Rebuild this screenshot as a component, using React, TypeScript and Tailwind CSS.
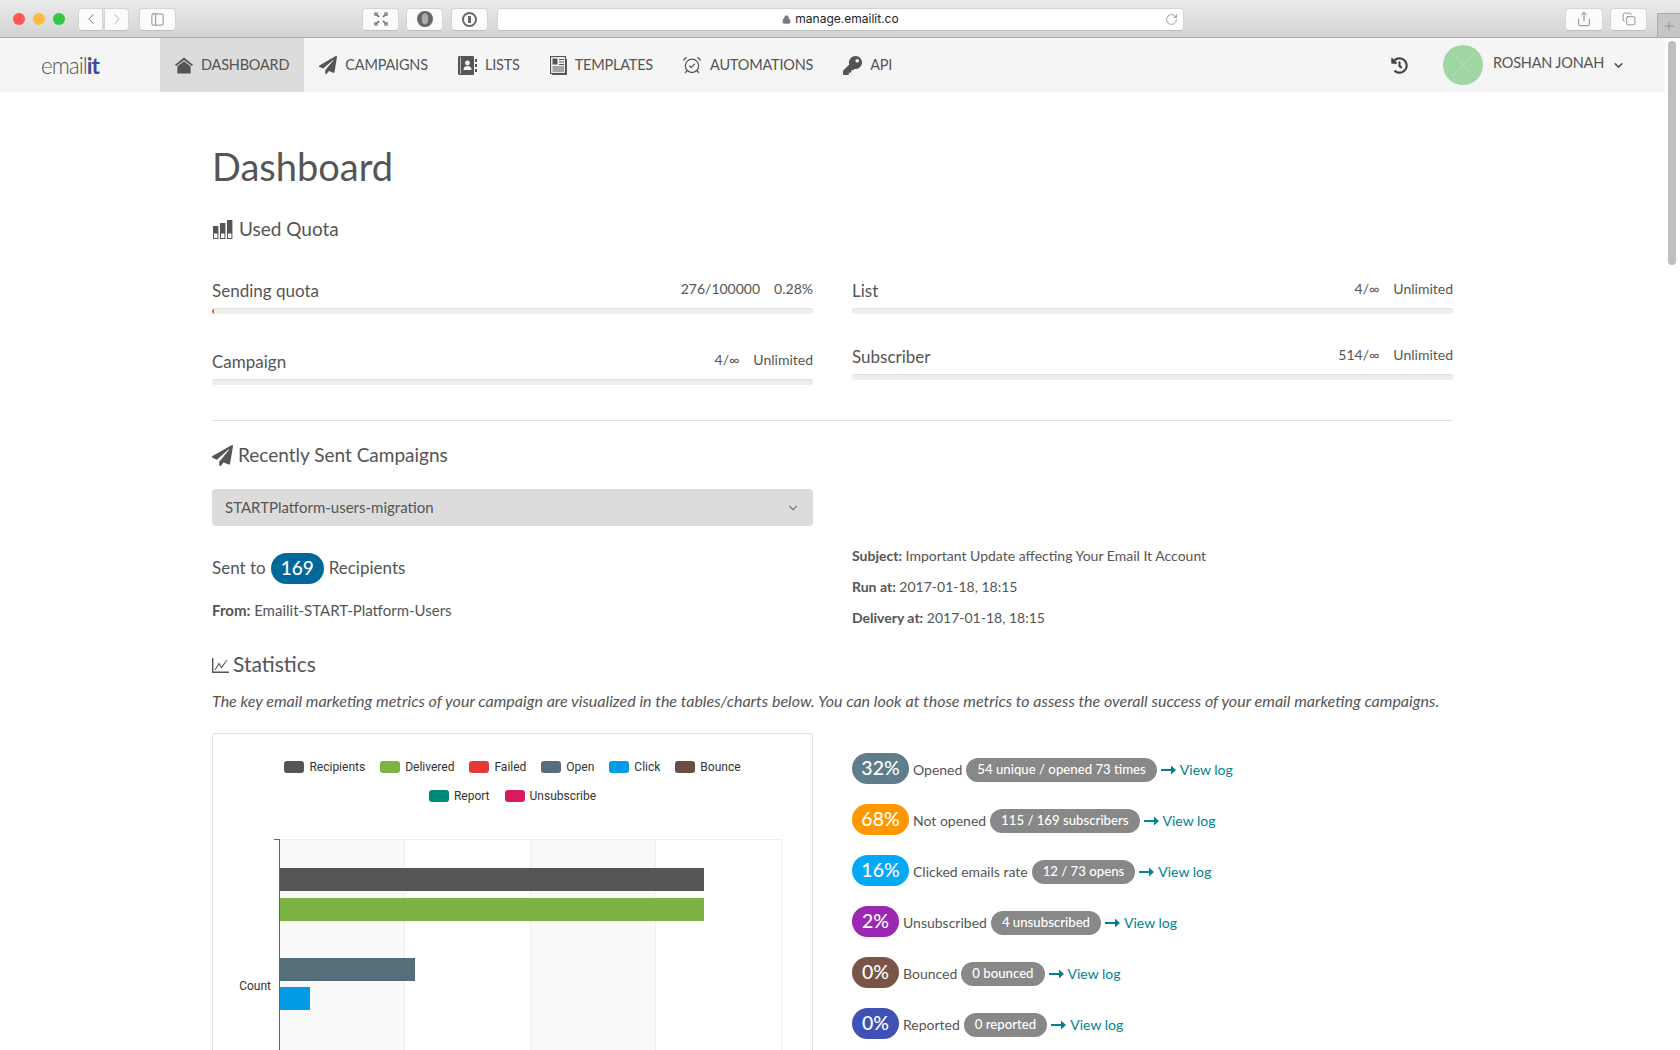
import React from 'react';
import { FaPaperPlane, FaKey, FaHistory } from 'react-icons/fa';
import { AlarmClockCheck, ChevronDown, ChevronLeft, ChevronRight, RotateCw, Share, Copy, Lock, Plus, PanelLeft } from 'lucide-react';

const HomeIcon = () => (
  <svg width="18" height="17" viewBox="0 0 19 17" fill="#555">
    <path d="M9.5 0 L19 7.6 L17.8 9 L9.5 2.6 L1.2 9 L0 7.6 Z" />
    <path d="M9.5 4 L16.5 9.4 V17 H2.5 V9.4 Z" />
  </svg>
);

const BookIcon = () => (
  <svg width="19" height="19" viewBox="0 0 19 19">
    <path d="M0 1.5 Q0 0 1.5 0 H15 Q16 0 16 1 V18 Q16 19 15 19 H1.5 Q0 19 0 17.5 Z" fill="#555" />
    <rect x="2" y="1" width="1" height="17" fill="#bbb" />
    <circle cx="9.5" cy="7" r="2.4" fill="#f5f5f5" />
    <path d="M5.5 14 Q5.5 10 9.5 10 Q13.5 10 13.5 14 Z" fill="#f5f5f5" />
    <path d="M17 3 H19 V6 H17 Z M17 8 H19 V11 H17 Z M17 13 H19 V16 H17 Z" fill="#555" />
  </svg>
);

const PaperIcon = () => (
  <svg width="17" height="19" viewBox="0 0 17 19" fill="none" stroke="#555">
    <rect x="0.5" y="0.5" width="15" height="17" strokeWidth="1.2" />
    <path d="M16.5 3 V18.5 H2" strokeWidth="1" />
    <rect x="2.5" y="2.5" width="5" height="6" fill="#555" stroke="none" />
    <path d="M9 3.5 H14 M9 6 H14 M9 8.5 H14 M2.5 11 H14 M2.5 13 H14 M2.5 15 H14" strokeWidth="1.1" />
  </svg>
);

const navItems = [
  { label: 'Dashboard', icon: <HomeIcon />, active: true },
  { label: 'Campaigns', icon: <FaPaperPlane size={18} /> },
  { label: 'Lists', icon: <BookIcon /> },
  { label: 'Templates', icon: <PaperIcon /> },
  { label: 'Automations', icon: <AlarmClockCheck size={20} strokeWidth={1.5} className="-ml-px" /> },
  { label: 'API', icon: <FaKey size={19} /> },
];

const stats = [
  { pct: '32%', color: 'bg-[#607d8b]', wide: true, label: 'Opened', detail: '54 unique / opened 73 times' },
  { pct: '68%', color: 'bg-[#ff9800]', wide: true, label: 'Not opened', detail: '115 / 169 subscribers' },
  { pct: '16%', color: 'bg-[#03a9f4]', wide: true, label: 'Clicked emails rate', detail: '12 / 73 opens' },
  { pct: '2%', color: 'bg-[#9c27b0]', wide: false, label: 'Unsubscribed', detail: '4 unsubscribed' },
  { pct: '0%', color: 'bg-[#795548]', wide: false, label: 'Bounced', detail: '0 bounced' },
  { pct: '0%', color: 'bg-[#3f51b5]', wide: false, label: 'Reported', detail: '0 reported' },
];

const legend = [
  [
    { name: 'Recipients', color: 'bg-[#555555]' },
    { name: 'Delivered', color: 'bg-[#7cb342]' },
    { name: 'Failed', color: 'bg-[#e53935]' },
    { name: 'Open', color: 'bg-[#546e7a]' },
    { name: 'Click', color: 'bg-[#039be5]' },
    { name: 'Bounce', color: 'bg-[#6d4c41]' },
  ],
  [
    { name: 'Report', color: 'bg-[#00897b]' },
    { name: 'Unsubscribe', color: 'bg-[#d81b60]' },
  ],
];

const ToolButton = ({ className, children }: { className: string; children?: React.ReactNode }) => (
  <div className={`h-[23px] flex items-center justify-center rounded-[4px] bg-[#fbfbfb] border border-[#d4d4d4] border-b-[#bdbdbd] text-[#6f6f6f] ${className}`}>
    {children}
  </div>
);

const BrowserBar = () => (
  <div className="h-[38px] relative flex items-center pt-px bg-gradient-to-b from-[#ebebeb] to-[#d3d3d3] border-b border-[#ababab]">
    <div className="flex gap-2 ml-[13px] w-[65px]">
      <span className="w-3 h-3 rounded-full bg-[#fc5753]" />
      <span className="w-3 h-3 rounded-full bg-[#fdbc40]" />
      <span className="w-3 h-3 rounded-full bg-[#33c748]" />
    </div>
    <ToolButton className="w-[25px] rounded-r-none"><ChevronLeft size={18} strokeWidth={1.2} /></ToolButton>
    <ToolButton className="w-[25px] ml-px rounded-l-none text-[#a8a8a8]"><ChevronRight size={18} strokeWidth={1.2} /></ToolButton>
    <ToolButton className="w-[37px] ml-[10px]"><PanelLeft size={15} strokeWidth={1.2} /></ToolButton>
    <ToolButton className="w-[37px] ml-[186px]">
      <svg width="14" height="14" viewBox="0 0 14 14" fill="none" stroke="#666" strokeWidth="1.2">
        <path d="M1 4 V1 H4 M10 1 H13 V4 M1 10 V13 H4 M10 13 H13 V10" />
        <path d="M2 2 L5 5 M12 2 L9 5 M2 12 L5 9 M12 12 L9 9" strokeWidth="1.6" />
      </svg>
    </ToolButton>
    <ToolButton className="w-[37px] ml-[7px]">
      <svg width="16" height="16" viewBox="0 0 16 16">
        <circle cx="8" cy="8" r="8" fill="#666" />
        <path d="M4.8 7 Q5 2.2 8 2.2 Q11 2.2 11.2 7 V10 Q10.5 13.4 8 13.4 Q5.5 13.4 4.8 10 Z" fill="#aaa" />
      </svg>
    </ToolButton>
    <ToolButton className="w-[37px] ml-2">
      <span className="w-[15px] h-[15px] rounded-full border-2 border-[#666] flex items-center justify-center">
        <span className="w-[3px] h-[7px] bg-[#666]" />
      </span>
    </ToolButton>
    <ToolButton className="w-[687px] ml-[9px] relative bg-white text-[#222]">
      <Lock size={9} className="mr-1 text-[#777]" fill="#777" />
      <span className="text-[12px] font-['Inter',sans-serif]">manage.emailit.co</span>
      <RotateCw size={13} strokeWidth={1.3} className="absolute right-[5px] text-[#777]" />
    </ToolButton>
    <ToolButton className="w-[38px] ml-[381px]"><Share size={16} strokeWidth={1.2} /></ToolButton>
    <ToolButton className="w-[37px] ml-[7px]"><Copy size={14} strokeWidth={1.2} /></ToolButton>
    <div className="absolute right-0 bottom-0 w-[23px] h-[24px] bg-[#c6c6c6] border-l border-t border-[#acacac] flex items-center justify-center text-[#777]">
      <Plus size={14} strokeWidth={1} />
    </div>
  </div>
);

const TopNav = () => (
  <nav className="h-[54px] flex items-stretch bg-[#f5f5f5] text-[#555]">
    <div className="w-[160px] pl-[41px] pt-[2px] flex items-center text-[22.5px] font-light tracking-[-1px] text-[#555]">
      email<span className="font-bold text-[#3f4a9b]">it</span>
    </div>
    {navItems.map((item) => (
      <div key={item.label} className={`flex items-center gap-2 px-[15px] text-[14.5px] uppercase tracking-[-0.2px] ${item.active ? 'bg-[#dcdcdc]' : ''}`}>
        {item.icon}
        <span>{item.label}</span>
      </div>
    ))}
    <div className="ml-auto flex items-center mr-[40px]">
      <FaHistory size={17} className="text-[#444]" />
      <div className="w-10 h-10 rounded-full bg-[#9fd6a4] ml-[35px] flex items-center justify-center">
        <svg width="24" height="24" viewBox="0 0 24 24" stroke="#b5e0b9" strokeWidth="1">
          <path d="M2 1 L22 23 M22 1 L2 23" />
        </svg>
      </div>
      <span className="ml-[10px] text-[14.5px] tracking-[-0.2px] -mt-1">ROSHAN JONAH</span>
      <ChevronDown size={13} strokeWidth={3} className="ml-2" />
    </div>
  </nav>
);

const QuotaBar = ({ label, used, total, className, fill }: { label: string; used: string; total: string; className: string; fill?: boolean }) => (
  <div className={className}>
    <div className="flex items-end justify-between leading-[22px]">
      <span className="text-[17px]">{label}</span>
      <span className="text-[14px] flex gap-[14px] pb-[2px]"><span>{used}</span><span>{total}</span></span>
    </div>
    <div className="h-[6px] mt-[6px] rounded-[3px] bg-[#eeeeee] border-t border-[#dedede] overflow-hidden">
      {fill && <div className="h-full w-[2px] bg-[#ff5722]" />}
    </div>
  </div>
);

const QuotaIcon = () => (
  <svg width="20" height="19" viewBox="0 0 20 19" className="mr-[6px] ml-px">
    <g fill="#555">
      <rect x="0" y="6" width="5.4" height="7" />
      <rect x="7" y="3" width="5.4" height="10" />
      <rect x="14" y="0" width="5.4" height="13" />
    </g>
    <g fill="none" stroke="#555" strokeWidth="1">
      <rect x="0.5" y="13" width="4.4" height="5.5" />
      <rect x="7.5" y="13" width="4.4" height="5.5" />
      <rect x="14.5" y="13" width="4.4" height="5.5" />
    </g>
  </svg>
);

const LineIcon = () => (
  <svg width="17" height="15" viewBox="0 0 17 15" fill="none" stroke="#555" className="mr-[4px] mt-[3px]">
    <path d="M0.7 0 V14.2 H17" strokeWidth="1.4" />
    <path d="M3 12 L7 5.5 L9.5 9.5 L15 2" strokeWidth="1.1" />
  </svg>
);

const ArrowIcon = () => (
  <svg width="15" height="10" viewBox="0 0 15 10" fill="#00838f" className="ml-[4px]">
    <path d="M0 4 H10 V0.5 L15 5 L10 9.5 V6 H0 Z" />
  </svg>
);

const Chart = () => (
  <svg width="598" height="278" viewBox="0 0 598 278" className="block mt-[35px]" fontFamily="Roboto, sans-serif">
    <rect x="66" y="0" width="125" height="278" fill="#f9f9f9" />
    <rect x="317" y="0" width="125" height="278" fill="#f9f9f9" />
    <path d="M66 0.5H568.5V278M191.5 0V278M317.5 0V278M442.5 0V278" fill="none" stroke="#eeeeee" />
    <path d="M66.5 0V278M61 0.5H66" fill="none" stroke="#666" />
    <rect x="67" y="29" width="424" height="23" fill="#555555" />
    <rect x="67" y="59" width="424" height="23" fill="#7cb342" />
    <rect x="67" y="119" width="135" height="23" fill="#546e7a" />
    <rect x="67" y="148" width="30" height="23" fill="#039be5" />
    <text x="58" y="151" textAnchor="end" fontSize="12" fill="#333">Count</text>
  </svg>
);

const Statistic = ({ pct, color, wide, label, detail }: (typeof stats)[number]) => (
  <div className="h-[51px] flex items-start">
    <span className={`h-[31px] pb-[2px] flex items-center justify-center rounded-[16px] text-white text-[19.5px] font-medium ${wide ? 'w-[57px]' : 'w-[47px]'} ${color}`}>{pct}</span>
    <div className="flex items-center h-[31px] mt-[1px] ml-1">
      <span className="text-[14px]">{label}</span>
      <span className="h-[24px] px-[11px] ml-1 flex items-center rounded-[12px] bg-[#888888] text-white text-[13.2px] font-medium">{detail}</span>
      <ArrowIcon />
      <span className="ml-[4px] text-[14px] text-[#00838f]">View log</span>
    </div>
  </div>
);

export default function App() {
  return (
    <div className="h-[1050px] overflow-hidden bg-white text-[#555] font-['Lato',sans-serif] relative">
      <BrowserBar />
      <div className="flex">
        <div className="w-[1665px] shrink-0">
          <TopNav />
          <main className="w-[1241px] mx-auto pt-[49px]">
            <h1 className="text-[38px] leading-[50px]">Dashboard</h1>
            <h2 className="flex items-center text-[19px] leading-[28px] mt-[24px]"><QuotaIcon />Used Quota</h2>

            <div className="grid grid-cols-2 gap-x-[39px] mt-[35px] h-[143px] border-b border-[#e2e2e2]">
              <div>
                <QuotaBar label="Sending quota" used="276/100000" total="0.28%" className="" fill />
                <QuotaBar label="Campaign" used="4/∞" total="Unlimited" className="mt-[35px]" />
              </div>
              <div>
                <QuotaBar label="List" used="4/∞" total="Unlimited" className="" />
                <QuotaBar label="Subscriber" used="514/∞" total="Unlimited" className="mt-[30px]" />
              </div>
            </div>

            <h2 className="flex items-center text-[19px] leading-[28px] mt-[20px]"><FaPaperPlane size={21} className="mr-[5px]" />Recently Sent Campaigns</h2>

            <div className="grid grid-cols-2 gap-x-[39px] mt-[20px]">
              <div>
                <div className="h-[37px] px-[13px] flex items-center justify-between rounded-[4px] bg-[#dcdcdc] text-[15px]">
                  STARTPlatform-users-migration
                  <ChevronDown size={14} className="text-[#777]" />
                </div>
                <div className="flex items-center mt-[26px] text-[17px] h-[32px]">
                  Sent to
                  <span className="h-[31px] w-[53px] mx-[5px] flex items-center justify-center rounded-[16px] bg-[#01689b] text-white text-[19px] font-medium">169</span>
                  Recipients
                </div>
                <p className="text-[15px] mt-[15px]"><b>From:</b> Emailit-START-Platform-Users</p>
              </div>
              <div className="text-[14px] pt-[56px]">
                <p className="leading-[22px]"><b>Subject:</b> Important Update affecting Your Email It Account</p>
                <p className="leading-[22px] mt-[9px]"><b>Run at:</b> 2017-01-18, 18:15</p>
                <p className="leading-[22px] mt-[9px]"><b>Delivery at:</b> 2017-01-18, 18:15</p>
              </div>
            </div>

            <h2 className="flex items-center text-[21px] leading-[28px] mt-[21px]"><LineIcon />Statistics</h2>
            <p className="italic text-[16.04px] leading-[22px] mt-[12px]">The key email marketing metrics of your campaign are visualized in the tables/charts below. You can look at those metrics to assess the overall success of your email marketing campaigns.</p>

            <div className="grid grid-cols-2 gap-x-[39px] mt-[21px]">
              <div className="border border-[#e0e0e0] rounded-[3px] h-[400px]">
                <div className="flex flex-col items-center gap-[12px] pt-[24px] font-['Roboto',sans-serif] text-[12px] text-[#333]">
                  {legend.map((row, i) => (
                    <div key={i} className="flex gap-[15px] h-[17px] items-center">
                      {row.map((l) => (
                        <span key={l.name} className="flex items-center gap-[5px]">
                          <span className={`w-5 h-3 rounded-[3px] ${l.color}`} />
                          {l.name}
                        </span>
                      ))}
                    </div>
                  ))}
                </div>
                <Chart />
              </div>
              <div className="pt-[20px]">
                {stats.map((s) => <Statistic key={s.label} {...s} />)}
              </div>
            </div>
          </main>
        </div>
        <div className="flex-1 pt-[3px] pl-[3px]">
          <div className="w-2 h-[224px] rounded-full bg-[#bfbfbf]" />
        </div>
      </div>
    </div>
  );
}
